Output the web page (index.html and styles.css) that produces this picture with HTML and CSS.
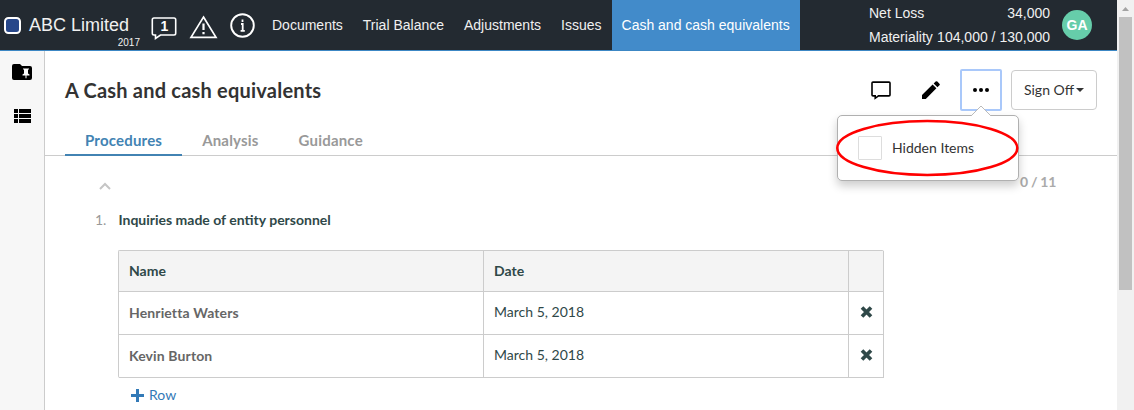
FILE: index.html
```
<!DOCTYPE html>
<html lang="en">
<head>
<meta charset="utf-8">
<title>ABC Limited</title>
<link rel="stylesheet" href="styles.css">
</head>
<body>
<div class="window">
  <div class="app">
    <header class="topbar">
      <svg class="logo" width="17" height="17" viewBox="0 0 17 17"><rect x="1" y="1" width="15" height="15" rx="3.500" fill="#27478a" stroke="#fff" stroke-width="2"/></svg>
      <div class="company"><span class="company-name">ABC Limited</span><span class="company-year">2017</span></div>
      <div class="status">
        <svg class="status-note" width="26" height="25" viewBox="0 0 26 25"><path d="M3 2h20q1.700 0 1.700 1.700v13.600q0 1.700-1.700 1.700H9.500L4.500 22.500V19H3q-1.700 0-1.700-1.700V3.700Q1.300 2 3 2z" fill="none" stroke="#fff" stroke-width="1.600"/><text x="13.300" y="15.200" text-anchor="middle" class="note-count">1</text></svg>
        <svg class="status-warn" width="29" height="25" viewBox="0 0 29 25"><path d="M14.500 3L27 23.300H2z" fill="none" stroke="#fff" stroke-width="1.700"/><path d="M14.500 9.500v6.500M14.500 18v2.300" stroke="#fff" stroke-width="2.200"/></svg>
        <svg class="status-info" width="26" height="26" viewBox="0 0 26 26"><circle cx="12.500" cy="12.500" r="11.300" fill="none" stroke="#fff" stroke-width="1.900"/><path d="M12.500 6.500v2.400M11 11h1.700v6.800M10.600 17.800h4.200" fill="none" stroke="#fff" stroke-width="1.800"/></svg>
      </div>
      <nav class="nav">
        <a class="nav-item">Documents</a>
        <a class="nav-item">Trial Balance</a>
        <a class="nav-item">Adjustments</a>
        <a class="nav-item">Issues</a>
        <a class="nav-item nav-active">Cash and cash equivalents</a>
      </nav>
      <dl class="figures">
        <dt>Net Loss</dt><dd>34,000</dd>
        <dt>Materiality</dt><dd>104,000 / 130,000</dd>
      </dl>
      <span class="avatar">GA</span>
    </header>
    <div class="body">
      <aside class="sidebar">
        <svg width="20" height="16" viewBox="0 0 20 16"><path d="M2 0h6l2 2h8q2 0 2 2v10q0 2-2 2H2q-2 0-2-2V2q0-2 2-2z"/><path d="M11 4.500h6v1h-1v4l1.500 1v1h-3v2.800h-1v-2.800h-3v-1l1.500-1v-4h-1z" fill="#fff"/></svg>
        <svg width="17" height="14" viewBox="0 0 17 14"><path d="M0 0h4v4H0zM5 0h12v4H5zM0 5h4v4H0zM5 5h12v4H5zM0 10h4v4H0zM5 10h12v4H5z"/></svg>
      </aside>
      <main class="main">
        <div class="heading">
          <h1 class="title">A Cash and cash equivalents</h1>
          <div class="tools">
            <svg class="tool-comment" width="20" height="19" viewBox="0 0 20 19"><path d="M2 1.100h16q1 0 1 1v11.800q0 1-1 1H7.500L4.200 17.300v-2.400H2q-1 0-1-1V2.100q0-1 1-1z" fill="none" stroke="#000" stroke-width="1.600"/></svg>
            <svg class="tool-edit" width="18" height="18" viewBox="0 0 19 19"><path d="M0 14.900L11.200 3.700l4 4L4 18.900H0zM12.300 2.700L14.400.6q.9-.9 1.800 0l2.200 2.200q.9.900 0 1.800l-2.100 2.100z"/></svg>
            <button class="more"><svg width="16" height="4" viewBox="0 0 16 4"><circle cx="2" cy="2" r="2"/><circle cx="8" cy="2" r="2"/><circle cx="14" cy="2" r="2"/></svg>
              <span class="menu">
                <svg class="menu-arrow" width="20" height="11" viewBox="0 0 20 11"><path d="M0 11L10 1l10 10" fill="#fff" stroke="#bbb"/></svg>
                <span class="checkbox"></span><span>Hidden Items</span>
                <svg class="highlight" width="184" height="58" viewBox="0 0 184 58"><ellipse cx="91.300" cy="29" rx="90" ry="27" fill="none" stroke="#f00" stroke-width="2.600"/></svg>
              </span>
            </button>
            <button class="signoff">Sign Off<i class="caret"></i></button>
          </div>
        </div>
        <div class="tabs"><a class="tab tab-active">Procedures</a><a class="tab">Analysis</a><a class="tab">Guidance</a></div>
        <div class="progress">
          <svg class="collapse" width="12" height="8" viewBox="0 0 12 8"><path d="M1 7l5-5 5 5" fill="none" stroke="#c5c5c5" stroke-width="2"/></svg>
          <span class="count">0 / 11</span>
        </div>
        <div class="procedure"><span class="number">1.</span><span class="question">Inquiries made of entity personnel</span></div>
        <div class="grid">
          <div class="cell head">Name</div><div class="cell head">Date</div><div class="cell head"></div>
          <div class="cell person">Henrietta Waters</div><div class="cell date">March 5, 2018</div><div class="cell remove"><svg width="13" height="12" viewBox="0 0 13 12"><path d="M2 1.500l9 9M11 1.500l-9 9" stroke="#2f4848" stroke-width="3.700"/></svg></div>
          <div class="cell person">Kevin Burton</div><div class="cell date">March 5, 2018</div><div class="cell remove"><svg width="13" height="12" viewBox="0 0 13 12"><path d="M2 1.500l9 9M11 1.500l-9 9" stroke="#2f4848" stroke-width="3.700"/></svg></div>
        </div>
        <a class="add"><svg width="13" height="13" viewBox="0 0 13 13"><path d="M5 0h3v5h5v3H8v5H5V8H0V5h5z" fill="#337ab7"/></svg>Row</a>
      </main>
    </div>
  </div>
  <div class="scroll">
    <svg width="7" height="4" viewBox="0 0 7 4"><path d="M0 4L3.500 0 7 4z" fill="#a3a3a3"/></svg>
    <div class="thumb"></div>
  </div>
</div>
</body>
</html>
```
FILE: styles.css
```
* { box-sizing: border-box; }
body { margin: 0; background: #fff; color: #2f4848; font: 14px/20px Lato, sans-serif; overflow: hidden; }
svg { display: block; flex: none; }
.window { display: flex; width: 1134px; height: 410px; }
.app { display: flex; flex-direction: column; width: 1117px; }

.topbar { display: flex; align-items: center; height: 51px; border-bottom: 1px solid #3c87c4; background: #232a31; color: #f0f0f0; font-family: "Liberation Sans", Arial, sans-serif; }
.logo { margin: 0 8px 0 4px; }
.company { display: flex; flex-direction: column; width: 111px; padding-top: 14px; height: 50px; }
.company-name { font-size: 18px; line-height: 22px; white-space: nowrap; }
.company-year { align-self: flex-end; padding-top: 1px; font-size: 10px; line-height: 12px; }
.status { display: flex; align-items: flex-start; width: 122px; height: 50px; }
.status-note { margin: 16px 0 0 11px; }
.status-warn { margin: 14px 0 0 12px; }
.status-info { margin: 13px 0 0 12px; }
.note-count { font: bold 14px "Liberation Sans", Arial, sans-serif; fill: #fff; }
.nav { display: flex; height: 50px; }
.nav-item { padding: 0 10px; line-height: 50px; white-space: nowrap; }
.nav-active { background: #428bca; color: #fff; }
.figures { display: grid; grid-template-columns: auto auto; justify-content: space-between; width: 181px; margin: 0 12px 0 auto; line-height: 24px; white-space: nowrap; }
.figures dd { margin: 0; text-align: right; }
.avatar { width: 30px; margin-right: 25px; border-radius: 50%; background: #66cdaa; color: #fff; font-weight: bold; line-height: 30px; text-align: center; }

.body { display: flex; flex: 1; min-height: 0; }
.sidebar { display: flex; flex-direction: column; align-items: center; gap: 29px; width: 45px; padding-top: 13px; border-right: 1px solid #ccc; background: #f7f7f7; }
.main { flex: 1; min-width: 0; }
.heading { display: flex; justify-content: space-between; height: 75px; padding: 18px 20px 0; }
.title { margin: 0; color: #333; font-size: 20px; letter-spacing: .21px; line-height: 42px; }
.tools { display: flex; align-items: flex-start; }
.tool-comment { margin: 12px 31px 0 0; }
.tool-edit { margin: 12px 20px 0 0; }
button { padding: 0; border: 1px solid #ccc; border-radius: 4px; background: #fff; color: #333; font: 14px/20px Lato, sans-serif; }
.more { position: relative; display: flex; align-items: center; justify-content: center; width: 42px; height: 42px; margin-right: 9px; border: 2px solid #a9c8fa; border-radius: 2px; }
.signoff { display: flex; align-items: center; justify-content: center; gap: 2px; width: 86px; height: 40px; margin-top: 1px; }
.caret { border: 4px solid transparent; border-top-color: #333; border-bottom: 0; }
.menu { position: absolute; z-index: 2; top: 44px; left: -125px; display: flex; align-items: center; gap: 10px; width: 182px; height: 66px; padding-left: 20px; border: 1px solid #b0b0b0; border-radius: 5px; background: #fff; box-shadow: 0 5px 10px rgba(0,0,0,.2); white-space: nowrap; }
.menu-arrow { position: absolute; top: -11px; left: 133px; }
.highlight { position: absolute; top: 3px; left: -2px; }
.checkbox { width: 24px; height: 24px; border: 1px solid #ddd; border-radius: 1px; }

.tabs { display: flex; height: 30px; padding-left: 20px; border-bottom: 1px solid #ccc; }
.tab { height: 30px; padding: 0 20px; color: #999; font-size: 15px; font-weight: bold; letter-spacing: .19px; line-height: 28px; }
.tab-active { border-bottom: 2px solid #4283b3; color: #4283b3; }
.progress { display: flex; align-items: center; justify-content: space-between; padding: 16px 61px 0 54px; }
.collapse { margin-top: 8px; }
.count { color: #aaa; font-weight: bold; letter-spacing: -.3px; }
.procedure { display: flex; gap: 12px; padding: 18px 0 0 50px; }
.number { color: #999; }
.question { font-weight: bold; }
.grid { display: grid; grid-template-columns: 365px 365px 35px; grid-template-rows: 41px 43px 43px; width: 766px; margin: 20px 0 0 73px; border: solid #ccc; border-width: 1px 0 0 1px; border-radius: 2px; }
.cell { padding: 10px; border: solid #ccc; border-width: 0 1px 1px 0; line-height: 21px; }
.head { padding-top: 9px; background: #f4f4f4; font-weight: bold; }
.person { color: #666; font-weight: bold; letter-spacing: .12px; }
.date { padding-top: 9px; }
.remove { padding: 14px 0 0 11px; }
.add { display: flex; align-items: center; gap: 5px; width: max-content; margin: 7px 0 0 86px; color: #337ab7; }

.scroll { display: flex; flex-direction: column; align-items: center; width: 17px; padding-top: 7px; background: #f1f1f1; }
.thumb { width: 13px; height: 273px; margin-top: 6px; background: #c1c1c1; }
```
